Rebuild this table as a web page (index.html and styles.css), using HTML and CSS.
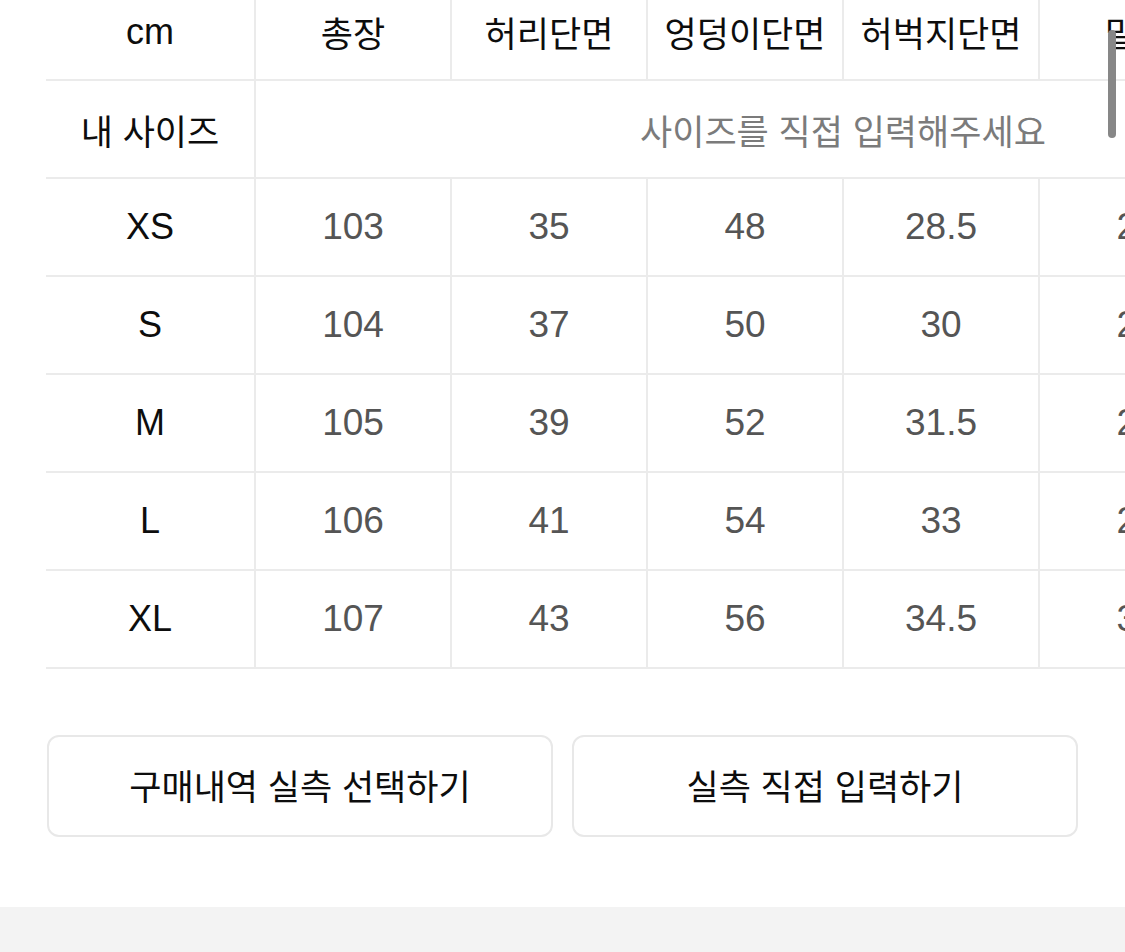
FILE: index.html
```html
<!DOCTYPE html>
<html lang="ko">
<head>
<meta charset="utf-8">
<title>사이즈</title>
<link rel="stylesheet" href="styles.css">
</head>
<body>
<div class="page">
  <div class="size-table">
    <div class="row head">
      <div class="label latin">cm</div>
      <div class="cell">총장</div>
      <div class="cell">허리단면</div>
      <div class="cell">엉덩이단면</div>
      <div class="cell">허벅지단면</div>
      <div class="cell">밑위</div>
    </div>
    <div class="row mine">
      <div class="label">내 사이즈</div>
      <div class="input">사이즈를 직접 입력해주세요</div>
    </div>
    <div class="row data">
      <div class="label latin">XS</div>
      <div class="cell num">103</div><div class="cell num">35</div><div class="cell num">48</div><div class="cell num">28.5</div><div class="cell num">26</div>
    </div>
    <div class="row data">
      <div class="label latin">S</div>
      <div class="cell num">104</div><div class="cell num">37</div><div class="cell num">50</div><div class="cell num">30</div><div class="cell num">27</div>
    </div>
    <div class="row data">
      <div class="label latin">M</div>
      <div class="cell num">105</div><div class="cell num">39</div><div class="cell num">52</div><div class="cell num">31.5</div><div class="cell num">28</div>
    </div>
    <div class="row data">
      <div class="label latin">L</div>
      <div class="cell num">106</div><div class="cell num">41</div><div class="cell num">54</div><div class="cell num">33</div><div class="cell num">29</div>
    </div>
    <div class="row data">
      <div class="label latin">XL</div>
      <div class="cell num">107</div><div class="cell num">43</div><div class="cell num">56</div><div class="cell num">34.5</div><div class="cell num">30</div>
    </div>
  </div>
  <div class="scrollbar"></div>
  <div class="actions">
    <button class="btn">구매내역 실측 선택하기</button>
    <button class="btn">실측 직접 입력하기</button>
  </div>
  <div class="footer"></div>
</div>
</body>
</html>
```

FILE: styles.css
```css
html, body {
  margin: 0;
  padding: 0;
  background: #ffffff;
  overflow: hidden;
}

body {
  font-family: "Liberation Sans", "Noto Sans CJK KR", sans-serif;
  color: #111111;
}

.page {
  position: relative;
  width: 1125px;
  height: 952px;
  display: flex;
  flex-direction: column;
  overflow: hidden;
}

.size-table {
  padding-left: 46px;
  overflow: hidden;
}

.row {
  display: flex;
  box-sizing: border-box;
  height: 98px;
  border-bottom: 2px solid #ebebeb;
}

.row.head {
  height: 81px;
}

.label {
  flex: 0 0 210px;
  box-sizing: border-box;
  border-right: 2px solid #ebebeb;
  display: flex;
  align-items: center;
  justify-content: center;
  font-size: 35px;
  color: #0d0d0d;
  white-space: nowrap;
}

.cell {
  flex: 0 0 196px;
  box-sizing: border-box;
  border-right: 2px solid #ebebeb;
  display: flex;
  align-items: center;
  justify-content: center;
  font-size: 35px;
  color: #0d0d0d;
  white-space: nowrap;
}

.row.head .label,
.row.head .cell {
  padding-bottom: 16px;
}

.latin {
  font-size: 36px;
}

.num {
  font-size: 37px;
  color: #555555;
}

.input {
  flex: 0 0 900px;
  display: flex;
  align-items: center;
  padding-left: 384px;
  box-sizing: border-box;
  font-size: 35px;
  color: #7b7b7b;
  white-space: nowrap;
}

.scrollbar {
  position: absolute;
  top: 30px;
  right: 9px;
  width: 8px;
  height: 108px;
  border-radius: 4px;
  background: #878787;
}

.actions {
  display: flex;
  gap: 19px;
  padding: 0 47px 0 47px;
  margin-top: 66px;
}

.btn {
  flex: 1 1 0;
  height: 102px;
  box-sizing: border-box;
  border: 2px solid #e8e8e8;
  border-radius: 12px;
  background: #ffffff;
  font-family: "Liberation Sans", "Noto Sans CJK KR", sans-serif;
  font-size: 35px;
  color: #0d0d0d;
  padding: 0 0 3px 0;
}

.footer {
  margin-top: 70px;
  flex: 1 1 auto;
  background: #f3f3f3;
}
```
